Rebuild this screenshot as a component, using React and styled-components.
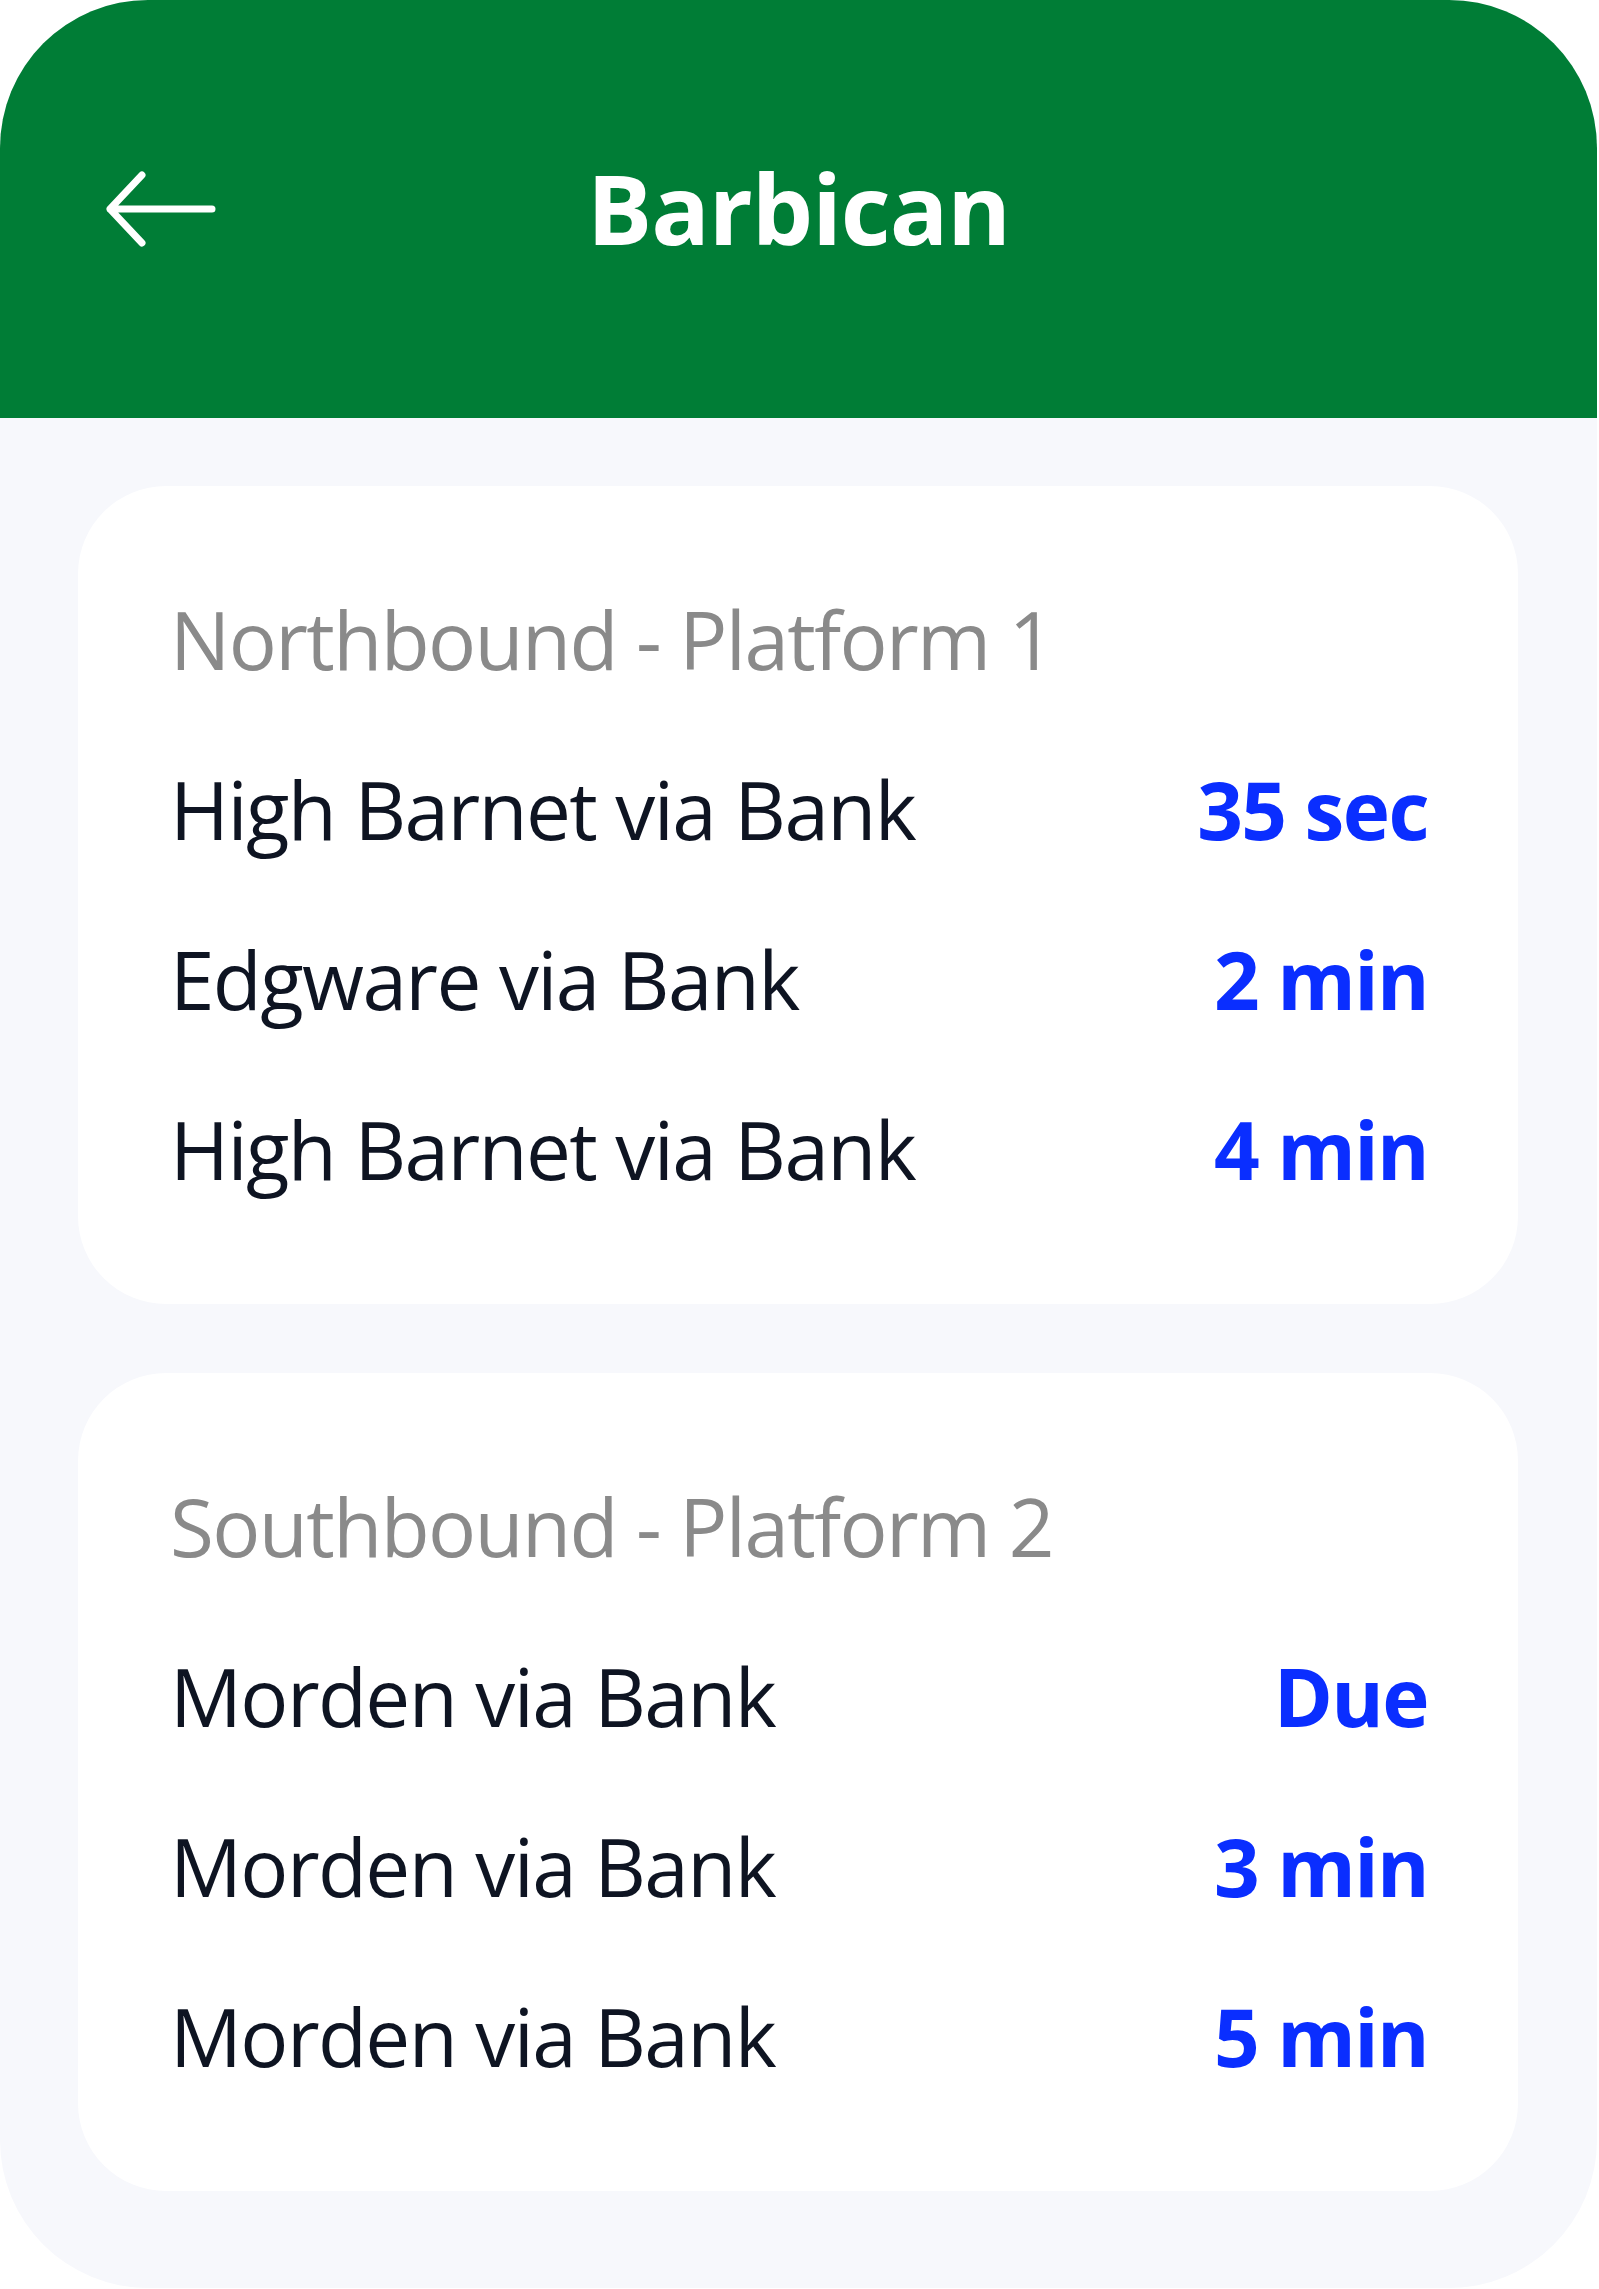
import React from 'react'
import styled, { createGlobalStyle } from 'styled-components'

const platforms = [
    {
        id: 1,
        title: 'Northbound - Platform 1',
        trains: [
            { id: 'n1', destination: 'High Barnet via Bank', due: '35 sec' },
            { id: 'n2', destination: 'Edgware via Bank', due: '2 min' },
            { id: 'n3', destination: 'High Barnet via Bank', due: '4 min' },
        ],
    },
    {
        id: 2,
        title: 'Southbound - Platform 2',
        trains: [
            { id: 's1', destination: 'Morden via Bank', due: 'Due' },
            { id: 's2', destination: 'Morden via Bank', due: '3 min' },
            { id: 's3', destination: 'Morden via Bank', due: '5 min' },
        ],
    },
]

const GlobalStyle = createGlobalStyle`
    body{
        margin: 0;
        background: #FFFFFF;
        font-family: "Open Sans", "Noto Sans", sans-serif;
    }
`

function BackArrow() {
    return (
        <svg width="112" height="80" viewBox="0 0 112 80" fill="none">
            <path
                d="M108 40H6M38 6L6 40l32 34"
                stroke="#FFFFFF"
                strokeWidth="7"
                strokeLinecap="round"
                strokeLinejoin="round"
            />
        </svg>
    )
}

function App() {
    return (
        <>
            <GlobalStyle />
            <Screen>
                <Header>
                    <BackButton aria-label="Back">
                        <BackArrow />
                    </BackButton>
                    <Title>Barbican</Title>
                    <span />
                </Header>
                <Content>
                    {platforms.map((platform) => (
                        <Card key={platform.id}>
                            <PlatformTitle>{platform.title}</PlatformTitle>
                            {platform.trains.map((train) => (
                                <TrainRow key={train.id}>
                                    <Destination>{train.destination}</Destination>
                                    <DueTime>{train.due}</DueTime>
                                </TrainRow>
                            ))}
                        </Card>
                    ))}
                </Content>
            </Screen>
        </>
    )
}

const Screen = styled.div`
    width: 1597px;
    height: 2288px;
    border-radius: 148px;
    overflow: hidden;
    background: #F7F8FC;
    display: flex;
    flex-direction: column;
`

const Header = styled.header`
    height: 418px;
    flex-shrink: 0;
    background: #007D36;
    display: grid;
    grid-template-columns: 1fr auto 1fr;
    align-items: center;
    padding: 0 0 0 104px;
    box-sizing: border-box;
`

const BackButton = styled.button`
    justify-self: start;
    display: flex;
    align-items: center;
    background: none;
    border: none;
    padding: 0;
    cursor: pointer;
`

const Title = styled.h1`
    margin: 0 0 0 -104px;
    color: #FFFFFF;
    font-size: 97px;
    font-weight: 700;
    letter-spacing: -1px;
    line-height: 1;
    padding-bottom: 4px;
`

const Content = styled.main`
    display: flex;
    flex-direction: column;
    gap: 69px;
    padding: 68px 79px 0 78px;
`

const Card = styled.section`
    background: #FFFFFF;
    border-radius: 88px;
    padding: 68px 90px 70px 92px;
    display: flex;
    flex-direction: column;
`

const PlatformTitle = styled.h2`
    margin: 0;
    color: #8A8A8A;
    font-size: 80px;
    font-weight: 400;
    letter-spacing: -1.6px;
    line-height: 170px;
`

const TrainRow = styled.div`
    display: flex;
    justify-content: space-between;
    align-items: center;
    height: 170px;
    font-size: 80px;
    letter-spacing: -1.6px;
    line-height: 170px;
`

const Destination = styled.span`
    color: #0E1422;
    font-weight: 400;
`

const DueTime = styled.span`
    color: #0A2EFF;
    font-weight: 700;
`

export default App
